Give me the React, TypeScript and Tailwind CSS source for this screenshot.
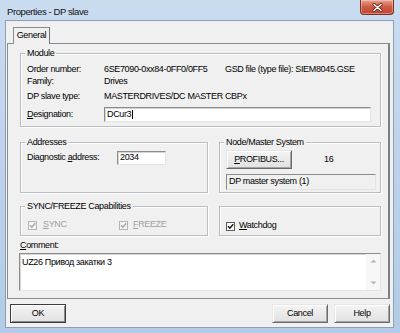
import type { ReactNode } from "react"

// Win7 style "Properties - DP slave" dialog

function GroupBox({ title, className, children }: { title: string; className?: string; children: ReactNode }) {
  return (
    <div
      className={`relative border border-[#b9bdc1] shadow-[inset_1px_1px_0_#fff,1px_1px_0_#fff] ${className ?? ""}`}
    >
      <span className="absolute -top-[6px] left-[4px] bg-[#f0f0f0] px-[2px] leading-[11px]">{title}</span>
      {children}
    </div>
  )
}

function Check({ disabled }: { disabled?: boolean }) {
  const c = disabled ? "#a8a8a8" : "#1a1a1a"
  return (
    <span
      className={`flex h-[9px] w-[9px] items-center justify-center border ${
        disabled ? "border-[#b4b4b4] bg-[#f4f4f4]" : "border-[#5a5a5a] bg-white"
      }`}
    >
      <svg width="7" height="7" viewBox="0 0 7 7">
        <path d="M1 3.2 L2.9 5.2 L6.2 1.2" fill="none" stroke={c} strokeWidth="1.5" />
      </svg>
    </span>
  )
}

function Button({ children, isDefault, className }: { children: ReactNode; isDefault?: boolean; className?: string }) {
  return (
    <div
      className={`flex h-[19px] items-center justify-center border bg-gradient-to-b from-[#f4f4f4] to-[#e1e1e1] ${
        isDefault
          ? "border-[#3c3c3c] shadow-[inset_1px_1px_0_#fff,inset_-1px_-1px_0_#8a8a8a]"
          : "border-t-[#e6e6e6] border-l-[#e6e6e6] border-b-[#6a6a6a] border-r-[#6a6a6a] shadow-[inset_1px_1px_0_#fff,inset_-1px_-1px_0_#a5a5a5]"
      } ${className ?? ""}`}
    >
      {children}
    </div>
  )
}

const sunken =
  "border border-t-[#8c8c8c] border-l-[#8c8c8c] border-b-[#e4e4e4] border-r-[#e4e4e4] shadow-[inset_1px_1px_0_#d6d6d6]"

export default function App() {
  return (
    <div className="flex h-[333px] w-[400px] flex-col overflow-hidden bg-gradient-to-b from-[#cadcf0] via-[#bdd2ea] to-[#b3cbe6] font-['Liberation_Sans',Arial,sans-serif] text-[9px] tracking-[-0.35px] text-black">
      {/* title bar */}
      <div className="flex h-[20px] items-start justify-between">
        <span className="mt-[6px] ml-[7px] text-[9.5px] leading-[11px] tracking-[-0.4px] text-[#111]">
          Properties - DP slave
        </span>
        <div className="mr-[6px] flex h-[15px] w-[34px] items-center justify-center rounded-b-[4px] border border-t-0 border-[#7a3020] bg-gradient-to-b from-[#e5a08f] via-[#cf5a42] to-[#c2452e] shadow-[inset_0_0_0_1px_rgba(255,255,255,0.35)]">
          <svg width="11" height="9" viewBox="0 0 11 9">
            <path d="M2 1.5 L9 7.5 M9 1.5 L2 7.5" stroke="#5a2418" strokeWidth="3" strokeLinecap="round" />
            <path d="M2 1.5 L9 7.5 M9 1.5 L2 7.5" stroke="#fff" strokeWidth="1.6" strokeLinecap="round" />
          </svg>
        </div>
      </div>

      {/* client area */}
      <div className="ml-[5px] mr-[6px] mb-[5px] flex flex-1 flex-col border border-[#8d9fb4] bg-[#f0f0f0]">
        {/* tab strip */}
        <div className="flex pt-[6px] pl-[7px]">
          <div className="relative z-10 -mb-px flex h-[17px] w-[37px] items-center justify-center border border-b-0 border-[#898c95] border-r-[#6f7278] bg-[#f0f0f0] pb-px">
            General
          </div>
        </div>

        {/* tab panel */}
        <div className="ml-px mr-[3px] flex h-[256px] flex-col border border-r-2 border-[#898c95] border-r-[#7d7f84] pt-[9px] pr-[7px] pl-[12px]">
          {/* Module */}
          <GroupBox title="Module" className="h-[74px] pl-[6px]">
            <div className="mt-[10px] flex h-[12px] items-center">
              <span className="w-[77px]">Order number:</span>
              <span className="w-[121px]">6SE7090-0xx84-0FF0/0FF5</span>
              <span>GSD file (type file): SIEM8045.GSE</span>
            </div>
            <div className="flex h-[12px] items-center">
              <span className="w-[77px]">Family:</span>
              <span>Drives</span>
            </div>
            <div className="mt-[3px] flex h-[12px] items-center">
              <span className="w-[77px]">DP slave type:</span>
              <span>MASTERDRIVES/DC MASTER CBPx</span>
            </div>
            <div className="mt-[4px] flex h-[15px] items-center">
              <span className="w-[77px]">
                <span className="underline">D</span>esignation:
              </span>
              <div className={`flex h-[15px] w-[267px] items-center bg-white pl-[2px] ${sunken}`}>
                DCur3
                <span className="ml-px h-[9px] w-px bg-black" />
              </div>
            </div>
          </GroupBox>

          {/* Addresses + Node/Master */}
          <div className="mt-[15px] flex gap-[11px]">
            <GroupBox title="Addresses" className="h-[51px] w-[188px] pl-[6px]">
              <div className="mt-[8px] flex h-[14px] items-center">
                <span className="w-[90px]">
                  Diagnostic <span className="underline">a</span>ddress:
                </span>
                <div className={`flex h-[14px] w-[49px] items-center bg-white pl-[2px] ${sunken}`}>2034</div>
              </div>
            </GroupBox>
            <GroupBox title="Node/Master System" className="h-[51px] w-[162px] pr-[4px] pl-[6px]">
              <div className="mt-[7px] flex items-center">
                <Button className="h-[16px] w-[66px]">
                  <span>
                    <span className="underline">P</span>ROFIBUS...
                  </span>
                </Button>
                <span className="ml-[32px]">16</span>
              </div>
              <div className={`mt-[5px] flex h-[16px] items-center bg-[#f0f0f0] pl-[2px] ${sunken} shadow-none`}>
                DP master system (1)
              </div>
            </GroupBox>
          </div>

          {/* SYNC/FREEZE + Watchdog */}
          <div className="mt-[13px] flex gap-[11px]">
            <GroupBox title="SYNC/FREEZE Capabilities" className="h-[30px] w-[188px] pl-[7px]">
              <div className="mt-[12px] flex h-[12px] items-center text-[#a0a0a0]">
                <Check disabled />
                <span className="ml-[6px] w-[76px]">
                  <span className="underline">S</span>YNC
                </span>
                <Check disabled />
                <span className="ml-[5px]">
                  <span className="underline">F</span>REEZE
                </span>
              </div>
            </GroupBox>
            <div className="h-[30px] w-[162px] border border-[#b9bdc1] pl-[6px] shadow-[inset_1px_1px_0_#fff,1px_1px_0_#fff]">
              <div className="mt-[13px] flex h-[12px] items-center">
                <Check />
                <span className="ml-[4px]">
                  <span className="underline">W</span>atchdog
                </span>
              </div>
            </div>
          </div>

          {/* Comment */}
          <div className="mt-[4px] flex h-[11px] items-center">
            <span>
              <span className="underline">C</span>omment:
            </span>
          </div>
          <div className={`mt-[2px] -ml-px flex h-[38px] w-[362px] bg-white ${sunken}`}>
            <div className="flex-1 pt-[3px] pl-[2px] leading-[11px]">UZ26 Привод закатки 3</div>
            <div className="flex w-[14px] flex-col items-center justify-between bg-[#f7f7f7] py-[5px]">
              <svg width="7" height="4" viewBox="0 0 7 4">
                <path d="M0.5 3.5 L3.5 0.5 L6.5 3.5 Z" fill="#b4b4b4" />
              </svg>
              <svg width="7" height="4" viewBox="0 0 7 4">
                <path d="M0.5 0.5 L3.5 3.5 L6.5 0.5 Z" fill="#b4b4b4" />
              </svg>
            </div>
          </div>
        </div>

        {/* buttons */}
        <div className="mt-[5px] flex pr-[3px] pl-[4px]">
          <Button isDefault className="w-[56px]">
            OK
          </Button>
          <div className="flex-1" />
          <Button className="w-[56px]">Cancel</Button>
          <Button className="ml-[6px] w-[56px]">Help</Button>
        </div>
      </div>
    </div>
  )
}
